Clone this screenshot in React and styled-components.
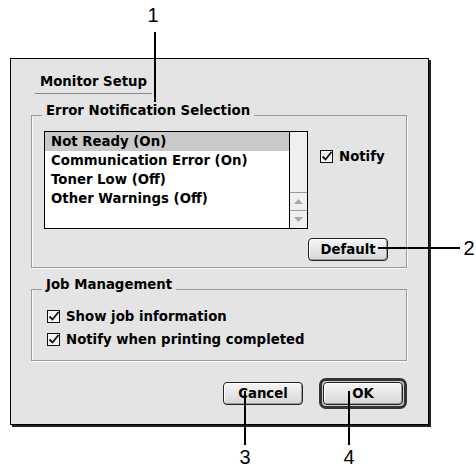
import styled, { createGlobalStyle } from 'styled-components'

const GlobalStyle = createGlobalStyle`
  html, body {
    margin: 0;
    padding: 0;
    background: #ffffff;
  }
`

const Page = styled.div`
  position: relative;
  width: 476px;
  height: 467px;
  overflow: hidden;
  padding: 58px 0 0 10px;
  box-sizing: border-box;
  font-family: 'DejaVu Sans', 'Liberation Sans', sans-serif;
  font-weight: bold;
  font-size: 13.3px;
  color: #000;
`

const Dialog = styled.div`
  width: 419px;
  height: 367px;
  box-sizing: border-box;
  background: #e4e4e4;
  border: 1px solid #000;
  box-shadow: 2px 2px 0 #222;
  padding: 15px 21px 0 20px;
  display: flex;
  flex-direction: column;
`

const Title = styled.div`
  width: 112px;
  margin-left: 4px;
  padding: 0 0 3px 5px;
  line-height: 16px;
  border-bottom: 1px solid #8a8a8a;
  white-space: nowrap;
`

const GroupHead = styled.div`
  display: flex;
  align-items: flex-end;
  gap: 4px;
  height: 16px;
  margin-top: ${(p) => p.$top}px;
`

const HeadLine = styled.span`
  flex: ${(p) => (p.$fill ? '1' : '0 0 10px')};
  border-bottom: 1px solid #9a9a9a;
  border-left: ${(p) => (p.$fill ? 'none' : '1px solid #9a9a9a')};
  border-right: ${(p) => (p.$fill ? '1px solid #9a9a9a' : 'none')};
  height: 0;
`

const HeadText = styled.span`
  line-height: 16px;
  position: relative;
  top: 3px;
  white-space: nowrap;
`

const GroupBody = styled.div`
  border: 1px solid #9a9a9a;
  border-top: none;
  box-shadow: inset 1px 0 0 #fafafa, 1px 1px 0 #fafafa;
  padding: ${(p) => p.$pad};
  display: flex;
  flex-direction: column;
  gap: ${(p) => p.$gap || 0}px;
`

const TopRow = styled.div`
  display: flex;
  align-items: flex-start;
  gap: 12px;
`

const ListBox = styled.div`
  width: 264px;
  height: 98px;
  box-sizing: border-box;
  border: 1px solid #000;
  background: #fff;
  display: flex;
`

const ListItems = styled.div`
  flex: 1;
  display: flex;
  flex-direction: column;
`

const ListRow = styled.div`
  height: 19px;
  line-height: 19px;
  padding-left: 6px;
  background: ${(p) => (p.$selected ? '#c9c9c9' : 'transparent')};
  white-space: nowrap;
`

const ScrollBar = styled.div`
  width: 17px;
  border-left: 1px solid #000;
  background: #efefef;
  display: flex;
  flex-direction: column;
  justify-content: flex-end;
`

const ArrowBox = styled.div`
  height: 17px;
  border-top: 1px solid #9a9a9a;
  display: flex;
  align-items: center;
  justify-content: center;
`

const CheckRow = styled.label`
  display: flex;
  align-items: center;
  gap: 5px;
  height: 16px;
  margin-top: ${(p) => p.$top || 0}px;
  white-space: nowrap;
`

const ButtonRow = styled.div`
  display: flex;
  justify-content: flex-end;
  align-items: center;
  gap: ${(p) => p.$gap || 0}px;
  padding-right: ${(p) => p.$right || 0}px;
  margin-top: ${(p) => p.$top || 0}px;
`

const Button = styled.div`
  width: 80px;
  height: 23px;
  box-sizing: border-box;
  border: 1px solid #222;
  border-radius: 4px;
  background: linear-gradient(#f6f6f6, #d6d6d6);
  box-shadow: inset -1px -1px 0 #9a9a9a, inset 1px 1px 0 #fff;
  display: flex;
  align-items: center;
  justify-content: center;
`

const DefaultRing = styled.div`
  border: 3px solid #333;
  border-radius: 7px;
  padding: 1px;
  background: #d0d0d0;
`

const Callout = styled.div`
  position: absolute;
  background: #000;
  left: ${(p) => p.$x}px;
  top: ${(p) => p.$y}px;
  width: ${(p) => p.$w}px;
  height: ${(p) => p.$h}px;
`

const CalloutNum = styled.div`
  position: absolute;
  left: ${(p) => p.$x}px;
  top: ${(p) => p.$y}px;
  width: 20px;
  text-align: center;
  font-family: 'Liberation Sans', Arial, sans-serif;
  font-weight: normal;
  font-size: 20px;
  line-height: 14px;
`

function Check() {
  return (
    <svg width='14' height='13' viewBox='0 0 14 13'>
      <rect x='0.5' y='0.5' width='12' height='12' fill='#f4f4f4' stroke='#111' />
      <path d='M2.5 6.5 L5.5 9.5 L11.5 2' fill='none' stroke='#111' strokeWidth='1.8' />
    </svg>
  )
}

function Arrow({ down }) {
  return (
    <svg width='9' height='5' viewBox='0 0 9 5'>
      <path d={down ? 'M0 0 H9 L4.5 5 Z' : 'M0 5 H9 L4.5 0 Z'} fill='#a8a8a8' />
    </svg>
  )
}

const items = [
  'Not Ready (On)',
  'Communication Error (On)',
  'Toner Low (Off)',
  'Other Warnings (Off)',
]

function App() {
  return (
    <Page>
      <GlobalStyle />
      <Dialog>
        <Title>Monitor Setup</Title>
        <GroupHead $top={6}>
          <HeadLine />
          <HeadText>Error Notification Selection</HeadText>
          <HeadLine $fill />
        </GroupHead>
        <GroupBody $pad='15px 0 6px 12px'>
          <TopRow>
            <ListBox>
              <ListItems>
                {items.map((item, i) => (
                  <ListRow key={item} $selected={i === 0}>
                    {item}
                  </ListRow>
                ))}
              </ListItems>
              <ScrollBar>
                <ArrowBox>
                  <Arrow />
                </ArrowBox>
                <ArrowBox>
                  <Arrow down />
                </ArrowBox>
              </ScrollBar>
            </ListBox>
            <CheckRow $top={17}>
              <Check />
              Notify
            </CheckRow>
          </TopRow>
          <ButtonRow $right={18} $top={9}>
            <Button>Default</Button>
          </ButtonRow>
        </GroupBody>
        <GroupHead $top={6}>
          <HeadLine />
          <HeadText>Job Management</HeadText>
          <HeadLine $fill />
        </GroupHead>
        <GroupBody $pad='18px 0 13px 15px' $gap={7}>
          <CheckRow>
            <Check />
            Show job information
          </CheckRow>
          <CheckRow>
            <Check />
            Notify when printing completed
          </CheckRow>
        </GroupBody>
        <ButtonRow $right={0} $top={17} $gap={16}>
          <Button>Cancel</Button>
          <DefaultRing>
            <Button>OK</Button>
          </DefaultRing>
        </ButtonRow>
      </Dialog>

      <Callout $x={154} $y={32} $w={2} $h={70} />
      <CalloutNum $x={143} $y={8}>1</CalloutNum>
      <Callout $x={378} $y={247} $w={82} $h={2} />
      <CalloutNum $x={459} $y={241}>2</CalloutNum>
      <Callout $x={244} $y={391} $w={2} $h={54} />
      <CalloutNum $x={235} $y={450}>3</CalloutNum>
      <Callout $x={348} $y={391} $w={2} $h={54} />
      <CalloutNum $x={339} $y={450}>4</CalloutNum>
    </Page>
  )
}

export default App
